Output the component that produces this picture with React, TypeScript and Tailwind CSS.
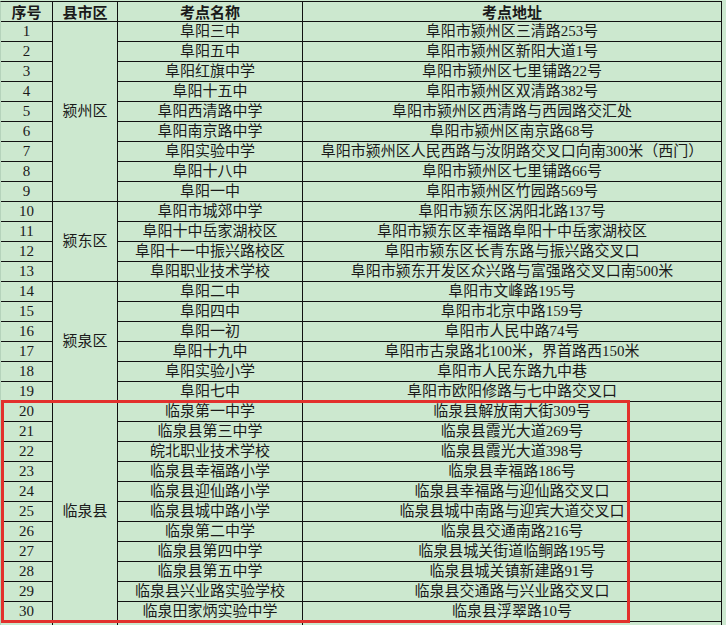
type Row = { no: number; name: string; addr: string };

const rows: Row[] = [
  { no: 1, name: '阜阳三中', addr: '阜阳市颍州区三清路253号' },
  { no: 2, name: '阜阳五中', addr: '阜阳市颍州区新阳大道1号' },
  { no: 3, name: '阜阳红旗中学', addr: '阜阳市颍州区七里铺路22号' },
  { no: 4, name: '阜阳十五中', addr: '阜阳市颍州区双清路382号' },
  { no: 5, name: '阜阳西清路中学', addr: '阜阳市颍州区西清路与西园路交汇处' },
  { no: 6, name: '阜阳南京路中学', addr: '阜阳市颍州区南京路68号' },
  { no: 7, name: '阜阳实验中学', addr: '阜阳市颍州区人民西路与汝阴路交叉口向南300米（西门）' },
  { no: 8, name: '阜阳十八中', addr: '阜阳市颍州区七里铺路66号' },
  { no: 9, name: '阜阳一中', addr: '阜阳市颍州区竹园路569号' },
  { no: 10, name: '阜阳市城郊中学', addr: '阜阳市颍东区涡阳北路137号' },
  { no: 11, name: '阜阳十中岳家湖校区', addr: '阜阳市颍东区幸福路阜阳十中岳家湖校区' },
  { no: 12, name: '阜阳十一中振兴路校区', addr: '阜阳市颍东区长青东路与振兴路交叉口' },
  { no: 13, name: '阜阳职业技术学校', addr: '阜阳市颍东开发区众兴路与富强路交叉口南500米' },
  { no: 14, name: '阜阳二中', addr: '阜阳市文峰路195号' },
  { no: 15, name: '阜阳四中', addr: '阜阳市北京中路159号' },
  { no: 16, name: '阜阳一初', addr: '阜阳市人民中路74号' },
  { no: 17, name: '阜阳十九中', addr: '阜阳市古泉路北100米，界首路西150米' },
  { no: 18, name: '阜阳实验小学', addr: '阜阳市人民东路九中巷' },
  { no: 19, name: '阜阳七中', addr: '阜阳市欧阳修路与七中路交叉口' },
  { no: 20, name: '临泉第一中学', addr: '临泉县解放南大街309号' },
  { no: 21, name: '临泉县第三中学', addr: '临泉县霞光大道269号' },
  { no: 22, name: '皖北职业技术学校', addr: '临泉县霞光大道398号' },
  { no: 23, name: '临泉县幸福路小学', addr: '临泉县幸福路186号' },
  { no: 24, name: '临泉县迎仙路小学', addr: '临泉县幸福路与迎仙路交叉口' },
  { no: 25, name: '临泉县城中路小学', addr: '临泉县城中南路与迎宾大道交叉口' },
  { no: 26, name: '临泉第二中学', addr: '临泉县交通南路216号' },
  { no: 27, name: '临泉县第四中学', addr: '临泉县城关街道临鲖路195号' },
  { no: 28, name: '临泉县第五中学', addr: '临泉县城关镇新建路91号' },
  { no: 29, name: '临泉县兴业路实验学校', addr: '临泉县交通路与兴业路交叉口' },
  { no: 30, name: '临泉田家炳实验中学', addr: '临泉县浮翠路10号' },
];

// merged district cells: first row number -> [label, span class]
const districts: Record<number, [string, string]> = {
  1: ['颍州区', 'row-span-9'],
  10: ['颍东区', 'row-span-4'],
  14: ['颍泉区', 'row-span-6'],
  20: ['临泉县', 'row-span-11'],
};

const cell = 'flex items-center justify-center border-r border-b border-[#111] whitespace-nowrap';

export default function App() {
  return (
    <div
      className="relative h-[625px] w-[726px] overflow-hidden bg-[#cce8cf] pt-px text-[15px] leading-none text-[#1a1a1a]"
      style={{ fontFamily: '"Liberation Serif", "Noto Sans CJK SC", serif' }}
    >
      <div className="grid w-[722px] grid-cols-[52px_65px_185px_419px] auto-rows-[20px] border-t border-l border-t-[#111] border-l-[#b5d3bb]">
        <div className={`${cell} font-bold`} style={{ fontFamily: '"Noto Sans CJK SC", sans-serif' }}>序号</div>
        <div className={`${cell} font-bold`} style={{ fontFamily: '"Noto Sans CJK SC", sans-serif' }}>县市区</div>
        <div className={`${cell} font-bold`} style={{ fontFamily: '"Noto Sans CJK SC", sans-serif' }}>考点名称</div>
        <div className={`${cell} font-bold`} style={{ fontFamily: '"Noto Sans CJK SC", sans-serif' }}>考点地址</div>
        {rows.map((r) => (
          <Fragment key={r.no}>
            <div className={cell}>{r.no}</div>
            {districts[r.no] && (
              <div className={`${cell} ${districts[r.no][1]}`}>{districts[r.no][0]}</div>
            )}
            <div className={cell}>{r.name}</div>
            <div className={cell}>{r.addr}</div>
          </Fragment>
        ))}
        <div className={cell}></div>
        <div className={cell}></div>
        <div className={cell}></div>
        <div className={cell}></div>
      </div>
      {/* highlight box around 临泉县 rows */}
      <div className="absolute left-px top-[400px] h-[223px] w-[629px] border-[3px] border-[#e2302c]"></div>
    </div>
  );
}

import { Fragment } from 'react';
